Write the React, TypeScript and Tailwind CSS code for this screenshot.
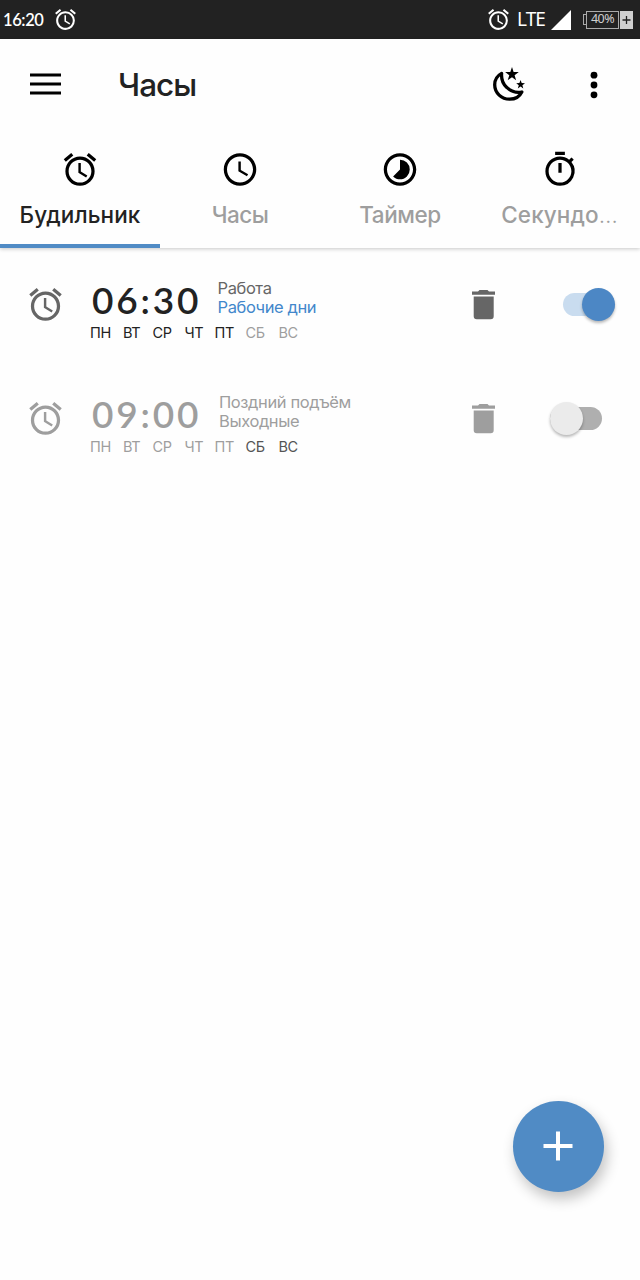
import { useState } from "react";
import clsx from "clsx";

const ALARM =
  "M22 5.72l-4.6-3.86-1.29 1.53 4.6 3.86L22 5.72zM7.88 3.39L6.6 1.86 2 5.71l1.29 1.53 4.59-3.85zM12.5 8H11v6l4.75 2.85.75-1.23-4-2.37V8zM12 4c-4.97 0-9 4.03-9 9s4.02 9 9 9a9 9 0 0 0 0-18zm0 16c-3.87 0-7-3.13-7-7s3.13-7 7-7 7 3.13 7 7-3.13 7-7 7z";
const CLOCK =
  "M11.99 2C6.47 2 2 6.48 2 12s4.47 10 9.99 10C17.52 22 22 17.52 22 12S17.52 2 11.99 2zM12 20c-4.42 0-8-3.58-8-8s3.58-8 8-8 8 3.58 8 8-3.58 8-8 8zm.5-13H11v6l5.25 3.15.75-1.23-4.5-2.67z";
const TIMELAPSE =
  "M16.24 7.76A5.974 5.974 0 0 0 12 6v6l-4.24 4.24c2.34 2.34 6.14 2.34 8.49 0a5.99 5.99 0 0 0-.01-8.48zM12 2C6.48 2 2 6.48 2 12s4.48 10 10 10 10-4.48 10-10S17.52 2 12 2zm0 18c-4.42 0-8-3.58-8-8s3.58-8 8-8 8 3.58 8 8-3.58 8-8 8z";
const STOPWATCH =
  "M15 1H9v2h6V1zm-4 13h2V8h-2v6zm8.03-6.61l1.42-1.42c-.43-.51-.9-.99-1.41-1.41l-1.42 1.42A8.962 8.962 0 0 0 12 4c-4.97 0-9 4.03-9 9s4.02 9 9 9a8.994 8.994 0 0 0 7.03-14.61zM12 20c-3.87 0-7-3.13-7-7s3.13-7 7-7 7 3.13 7 7-3.13 7-7 7z";

interface Alarm {
  id: number;
  time: string;
  title: string;
  repeat: string;
  days: number[];
  enabled: boolean;
}

const TABS = [
  { label: "Будильник", icon: ALARM, tracking: "tracking-[0.1px]" },
  { label: "Часы", icon: CLOCK, tracking: "tracking-[-0.5px]" },
  { label: "Таймер", icon: TIMELAPSE, tracking: "tracking-[-0.4px]" },
  { label: "Секундо", icon: STOPWATCH, tracking: "tracking-[0.1px]", cut: true },
];

const DAYS = [
  { label: "ПН", width: "w-[33px]" },
  { label: "ВТ", width: "w-[29.5px]" },
  { label: "СР", width: "w-[32px]" },
  { label: "ЧТ", width: "w-[30px]" },
  { label: "ПТ", width: "w-[31px]" },
  { label: "СБ", width: "w-[33px]" },
  { label: "ВС", width: "w-[24px]" },
];

const ALARMS: Alarm[] = [
  {
    id: 1,
    time: "06:30",
    title: "Работа",
    repeat: "Рабочие дни",
    days: [0, 1, 2, 3, 4],
    enabled: true,
  },
  {
    id: 2,
    time: "09:00",
    title: "Поздний подъём",
    repeat: "Выходные",
    days: [5, 6],
    enabled: false,
  },
];

function Glyph({ path, className }: { path: string; className?: string }) {
  return (
    <svg viewBox="0 0 24 24" fill="currentColor" className={className} aria-hidden>
      <path d={path} />
    </svg>
  );
}

function StatusBar() {
  return (
    <div className="flex h-[39px] items-center bg-[#222222] pr-[7px] pl-[3px] text-white">
      <span className="mt-px w-[50px] font-['Lato'] text-[16.5px] leading-none font-semibold tracking-[-0.4px]">
        16:20
      </span>
      <Glyph path={ALARM} className="size-[25px]" />
      <Glyph path={ALARM} className="ml-auto size-[25px]" />
      <span className="ml-[6px] w-[29px] font-['Noto_Sans'] text-[19px] leading-none tracking-[-0.9px]">
        LTE
      </span>
      <svg viewBox="0 0 20 20" className="ml-[5px] size-[20px]" aria-hidden>
        <path d="M20 0v20H0z" fill="#fff" />
      </svg>
      <div className="ml-[12px] flex h-[18px] items-center">
        <span className="h-[11px] w-[3px] border-y border-l border-[#aaaaaa]" />
        <span className="flex h-[18px] w-[33px] items-center justify-center border border-[#aaaaaa] font-['Noto_Sans'] text-[12.5px] leading-none tracking-[-0.5px] text-[#cfcfcf]">
          40%
        </span>
        <svg viewBox="0 0 13 18" className="ml-px h-[18px] w-[13px]" aria-hidden>
          <path d="M0 0h13v18H0z" fill="#d0d0d0" />
          <path d="M6.5 5v8M2.5 9h8" stroke="#222" strokeWidth="1.3" />
        </svg>
      </div>
    </div>
  );
}

function Header() {
  return (
    <header className="flex h-[90px] items-center pr-[42px] pl-[30px] text-black">
      <button type="button" aria-label="Меню">
        <svg viewBox="0 0 31 22" className="h-[22px] w-[31px]" aria-hidden>
          <path d="M0 2h31M0 11h31M0 20h31" stroke="currentColor" strokeWidth="3.2" />
        </svg>
      </button>
      <h1 className="mt-px ml-[57px] text-[31.5px] leading-none font-medium tracking-[-1px] text-[#222222]">
        Часы
      </h1>
      <button type="button" className="mt-[2px] ml-auto" aria-label="Ночной режим">
        <svg viewBox="0 0 34 36" className="h-[36px] w-[34px]" aria-hidden>
          <path
            d="M9.6 6.4C5.2 8.8 2.7 12.8 2.7 17.8 2.7 26 9.6 32.2 17.6 32.2c5.4 0 10-2.6 12.2-7.2-5.4 1-11-.6-15-4.6C11 17 9.200 11.600 9.600 6.400z"
            fill="none"
            stroke="currentColor"
            strokeWidth="3.3"
            strokeLinejoin="round"
          />
          <path
            d="M20 0l1.600 5 5.200.1-4.200 3.100 1.500 5-4.100-3-4.300 3 1.600-5-4.200-3.100 5.200-.1zM28.600 13.100l1.100 3 3.300.1-2.600 2 .9 3.200-2.700-1.900-2.800 1.900 1-3.200-2.600-2 3.200-.1z"
            fill="currentColor"
          />
        </svg>
      </button>
      <button type="button" className="mt-px ml-[64px]" aria-label="Ещё">
        <svg viewBox="0 0 8 28" className="h-[28px] w-[8px]" aria-hidden>
          <circle cx="4" cy="4.2" r="3.4" />
          <circle cx="4" cy="14" r="3.4" />
          <circle cx="4" cy="23.8" r="3.4" />
        </svg>
      </button>
    </header>
  );
}

function Switch({ on, onToggle }: { on: boolean; onToggle: () => void }) {
  return (
    <button
      type="button"
      role="switch"
      aria-checked={on}
      onClick={onToggle}
      className={clsx(
        "flex h-[23px] w-[52px] items-center rounded-full",
        on ? "ml-[68px] justify-end bg-[#c9dcef]" : "ml-[55px] bg-[#afafaf]",
      )}
    >
      <span
        className={clsx(
          "size-[33px] shrink-0 rounded-full shadow-[0_2px_3px_rgba(0,0,0,0.28)]",
          on ? "bg-[#4c87c5]" : "bg-[#ebebeb]",
        )}
      />
    </button>
  );
}

function AlarmRow({ alarm, onToggle }: { alarm: Alarm; onToggle: () => void }) {
  const { enabled } = alarm;

  return (
    <li className="flex h-[114px] items-center pb-[2px] pl-[26px]">
      <Glyph
        path={ALARM}
        className={clsx("size-[39px] shrink-0", enabled ? "text-[#666666]" : "text-[#9e9e9e]")}
      />
      <div className="mt-[12px] ml-[25px] w-[380px]">
        <div className="flex h-[42px] items-center">
          <span
            className={clsx(
              "ml-[2px] font-['Lato'] text-[37px] leading-none font-semibold tracking-[2.8px]",
              enabled ? "w-[125.5px] text-[#222222]" : "w-[127px] text-[#9e9e9e]",
            )}
          >
            {alarm.time}
          </span>
          <div className="mt-[-3px] text-[16.5px] leading-[18.5px] tracking-[-0.4px]">
            <p className={enabled ? "text-[#666666]" : "text-[#9e9e9e]"}>{alarm.title}</p>
            <p className={enabled ? "text-[#4287cb]" : "text-[#9e9e9e]"}>{alarm.repeat}</p>
          </div>
        </div>
        <div className="mt-[4px] flex text-[14.5px] leading-[18px] tracking-[-0.4px]">
          {DAYS.map((day, i) => (
            <span
              key={day.label}
              className={clsx(
                day.width,
                !alarm.days.includes(i)
                  ? "text-[#9e9e9e]"
                  : enabled
                    ? "text-[#222222]"
                    : "text-[#555555]",
              )}
            >
              {day.label}
            </span>
          ))}
        </div>
      </div>
      <button type="button" aria-label="Удалить" className="mt-px ml-[2px]">
        <svg
          viewBox="0 0 23 30"
          fill="currentColor"
          className={clsx("h-[30px] w-[23px]", enabled ? "text-[#666666]" : "text-[#9e9e9e]")}
          aria-hidden
        >
          <path d="M0 1.5h6L7.5 0h8L17 1.5h6v3.2H0zM1.7 6.5h20v19.8a3 3 0 0 1-3 3H4.7a3 3 0 0 1-3-3z" />
        </svg>
      </button>
      <Switch on={enabled} onToggle={onToggle} />
    </li>
  );
}

export default function App() {
  const [active, setActive] = useState(0);
  const [alarms, setAlarms] = useState(ALARMS);

  const toggle = (id: number) =>
    setAlarms((prev) => prev.map((a) => (a.id === id ? { ...a, enabled: !a.enabled } : a)));

  return (
    <div className="flex h-[1280px] w-[640px] flex-col overflow-hidden bg-[#fefefe] font-['Inter',sans-serif]">
      <StatusBar />
      <div className="bg-[#fefefe] shadow-[0_1px_4px_rgba(0,0,0,0.22)]">
        <Header />
        <nav className="grid h-[119px] grid-cols-4">
          {TABS.map((tab, i) => (
            <button
              key={tab.label}
              type="button"
              onClick={() => setActive(i)}
              className={clsx(
                "flex flex-col items-center border-b-4 pt-[21px]",
                i === active ? "border-[#508bc5]" : "border-transparent",
              )}
            >
              <Glyph path={tab.icon} className="size-[39px] -translate-x-[0.5px] text-black" />
              <span
                className={clsx(
                  "mt-[10px] text-[22.5px] leading-[32px] font-medium whitespace-nowrap",
                  tab.tracking,
                  i === active ? "text-[#222222]" : "text-[#9e9e9e]",
                )}
              >
                {tab.label}
                {tab.cut && <span className="font-light tracking-[1px]">…</span>}
              </span>
            </button>
          ))}
        </nav>
      </div>

      <ul className="flex-1">
        {alarms.map((alarm) => (
          <AlarmRow key={alarm.id} alarm={alarm} onToggle={() => toggle(alarm.id)} />
        ))}
      </ul>

      <div className="flex justify-end pr-[36px] pb-[88px]">
        <button
          type="button"
          aria-label="Добавить будильник"
          className="flex size-[91px] items-center justify-center rounded-full bg-[#508bc5] pr-px pb-px shadow-[3px_7px_14px_rgba(0,0,0,0.24)]"
        >
          <svg viewBox="0 0 30 30" className="size-[30px]" aria-hidden>
            <path d="M15 .5v29M.5 15h29" stroke="#fff" strokeWidth="4" />
          </svg>
        </button>
      </div>
    </div>
  );
}
